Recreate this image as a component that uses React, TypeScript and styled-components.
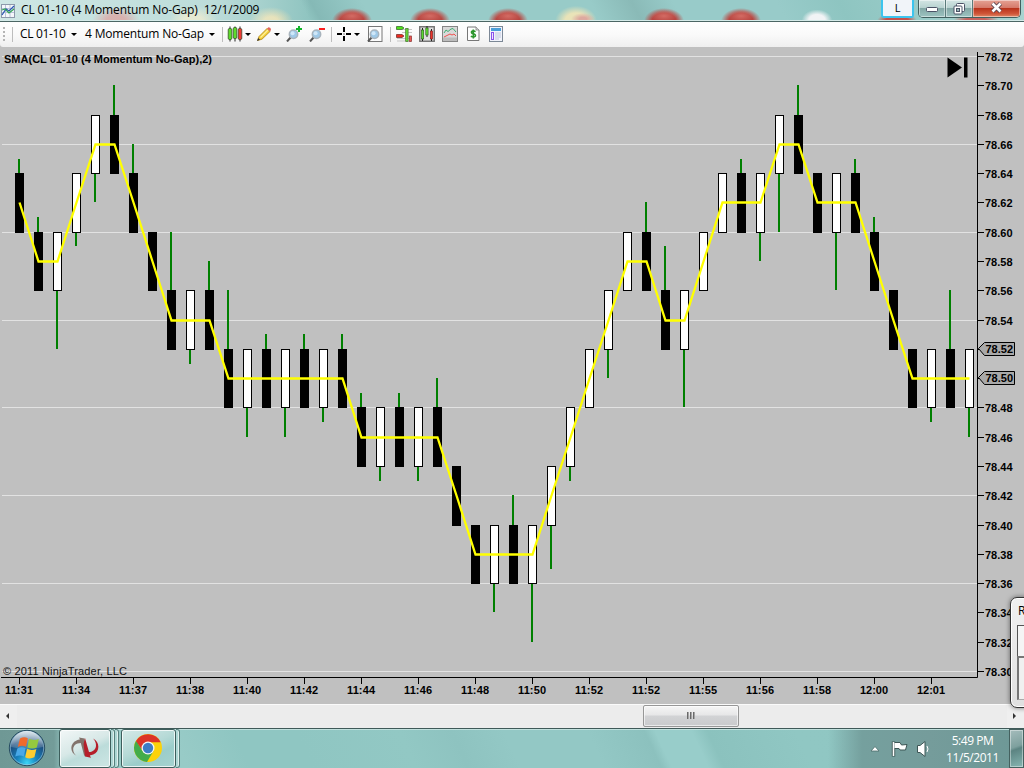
import React from 'react';
import styled, { createGlobalStyle, css } from 'styled-components';

const Global = createGlobalStyle`
  * { box-sizing: border-box; }
  html, body { margin: 0; padding: 0; overflow: hidden; }
`;

const Screen = styled.div`
  position: relative;
  display: flex;
  flex-direction: column;
  width: 1024px;
  height: 768px;
  overflow: hidden;
  background: #c0c0c0;
  font-family: 'Open Sans', 'Noto Sans', sans-serif;
  font-size: 12px;
  color: #000;
`;

const TitleBar = styled.header`
  display: flex;
  align-items: flex-start;
  height: 22px;
  flex: none;
  overflow: hidden;
  border-bottom: 1px solid #4b6664;
  box-shadow: inset 0 -1px 0 #d5ebe9;
  background:
    linear-gradient(90deg, rgba(235, 246, 245, 0.7) 0, rgba(225, 240, 238, 0.55) 215px, rgba(200, 225, 222, 0) 310px),
    radial-gradient(ellipse 24px 14px at 116px 21px, #c24843 0 40%, transparent 100%),
    radial-gradient(ellipse 24px 15px at 193px 21px, #e9dfae 0 40%, transparent 100%),
    radial-gradient(ellipse 22px 14px at 271px 21px, #e9dfae 0 30%, transparent 100%),
    radial-gradient(ellipse 13px 6px at 352px 16px, rgba(218, 116, 108, 0.8) 0, transparent 100%),
    radial-gradient(ellipse 20px 13px at 352px 21px, #b84641 0 60%, transparent 100%),
    radial-gradient(ellipse 13px 6px at 430px 16px, rgba(218, 116, 108, 0.8) 0, transparent 100%),
    radial-gradient(ellipse 20px 13px at 430px 21px, #b84641 0 60%, transparent 100%),
    radial-gradient(ellipse 13px 6px at 508px 16px, rgba(218, 116, 108, 0.8) 0, transparent 100%),
    radial-gradient(ellipse 20px 13px at 508px 21px, #b84641 0 60%, transparent 100%),
    radial-gradient(ellipse 12px 6px at 583px 19px, #dda9a0 0 30%, transparent 100%),
    radial-gradient(ellipse 22px 16px at 576px 21px, #e9e3b8 0 50%, transparent 95%),
    radial-gradient(ellipse 13px 6px at 664px 16px, rgba(218, 116, 108, 0.8) 0, transparent 100%),
    radial-gradient(ellipse 20px 13px at 664px 21px, #b84641 0 60%, transparent 100%),
    radial-gradient(ellipse 13px 6px at 741px 16px, rgba(218, 116, 108, 0.8) 0, transparent 100%),
    radial-gradient(ellipse 20px 13px at 741px 21px, #b84641 0 60%, transparent 100%),
    radial-gradient(ellipse 16px 11px at 817px 20px, #f1f3f5 0 50%, transparent 95%),
    radial-gradient(ellipse 21px 9px at 897px 21px, #c5504a 0 55%, transparent 95%),
    radial-gradient(ellipse 24px 9px at 976px 21px, #c6635e 0 45%, transparent 95%),
    linear-gradient(62deg, #8fc4c0 0 30%, #85b9b6 31%, #98cbc8 36% 58%, #8abab7 62%, #98cbc9 66% 76%, #8ec5c1 82%, #a9d4d1 100%);
`;

const TitleIcon = styled.svg`
  width: 14px;
  height: 14px;
  margin: 4px 0 0 1px;
`;

const TitleText = styled.h1`
  flex: 1;
  margin: 1px 0 0 6px;
  font-size: 12px;
  font-weight: 400;
  line-height: 18px;
  letter-spacing: -0.13px;
  white-space: pre;
`;

const LangButton = styled.div`
  width: 33px;
  height: 18px;
  margin-right: 4px;
  border: 2px solid #3cc4ee;
  border-top: 0;
  border-radius: 0 0 3px 3px;
  background: #f1f4f9;
  font-size: 11px;
  line-height: 16px;
  text-align: center;
`;

const Controls = styled.div`
  display: flex;
  width: 103px;
  height: 18px;
  margin-right: 3px;
  border: 1px solid #41605f;
  border-top: 0;
  border-radius: 0 0 5px 5px;
  overflow: hidden;
`;

const ControlButton = styled.div<{ $close?: boolean }>`
  display: flex;
  align-items: center;
  justify-content: center;
  flex: ${(p) => (p.$close ? '0 0 47px' : '1')};
  padding-bottom: ${(p) => (p.$close ? '2px' : '0')};
  border-right: 1px solid #5a7b7a;
  box-shadow: inset 0 0 0 1px rgba(255, 255, 255, 0.45);
  background: linear-gradient(#d3e5e4 0, #b9d3d1 44%, #84a8a6 50%, #9dc4c1 100%);
  ${(p) =>
    p.$close &&
    css`
      border-right: 0;
      background: linear-gradient(#e5a294 0, #d67c6c 44%, #b9341c 50%, #cf5538 80%, #df8a68 100%);
    `}
`;

const Toolbar = styled.nav`
  display: flex;
  align-items: center;
  flex: none;
  height: 25px;
  padding: 0 0 1px 3px;
  background: linear-gradient(#fefefe, #fafafa 50%, #efefef);
  border-radius: 0 0 3px 3px;
`;

const Grip = styled.div`
  width: 2px;
  height: 14px;
  background: repeating-linear-gradient(#b5b5b5 0 2px, transparent 2px 4px);
`;

const Divider = styled.div<{ $left: number; $right: number }>`
  width: 1px;
  height: 15px;
  margin: 0 ${(p) => p.$right}px 0 ${(p) => p.$left}px;
  background: #bdbdbd;
`;

const Dropdown = styled.div<{ $width: number; $gap?: number; $spacing: number }>`
  display: flex;
  align-items: center;
  justify-content: space-between;
  width: ${(p) => p.$width}px;
  margin-right: ${(p) => p.$gap ?? 0}px;
  line-height: 18px;
  letter-spacing: ${(p) => p.$spacing}px;
  white-space: nowrap;
`;

const Caret = styled.span`
  flex: none;
  width: 0;
  height: 0;
  margin-top: 1px;
  border: 3px solid transparent;
  border-top-color: #000;
  border-bottom: 0;
`;

const Tool = styled.div<{ $gap?: number }>`
  display: flex;
  align-items: center;
  gap: 2px;
  margin-right: ${(p) => p.$gap ?? 7}px;
  svg { display: block; flex: none; }
`;

const ChartArea = styled.main`
  flex: none;
  height: 657px;
  svg { display: block; }
`;

const ScrollTrack = styled.div`
  display: flex;
  align-items: stretch;
  justify-content: space-between;
  flex: none;
  height: 24px;
  border-top: 1px solid #fafafa;
  background: #ececec;
`;

const ScrollArrow = styled.div<{ $dir: 'left' | 'right' }>`
  display: flex;
  align-items: center;
  justify-content: center;
  width: 17px;
  padding-bottom: 2px;
  padding-right: 2px;
  background: #efefef;
  &::before {
    content: '';
    border: 3.5px solid transparent;
    ${(p) => (p.$dir === 'left' ? 'border-right-color: #333; border-left: 0;' : 'border-left-color: #333; border-right: 0;')}
  }
`;

const ScrollThumb = styled.div`
  display: flex;
  align-items: center;
  justify-content: center;
  width: 96px;
  height: 22px;
  margin-left: 626px;
  margin-right: 268px;
  padding-bottom: 2px;
  border: 1px solid #979797;
  border-radius: 2px;
  background: linear-gradient(#f5f5f5 0, #e7e7e8 45%, #d2d3d5 50%, #c9cacc 100%);
  box-shadow: inset 0 0 0 1px rgba(255, 255, 255, 0.6);
`;

const ThumbGrip = styled.div`
  width: 8px;
  height: 7px;
  background: repeating-linear-gradient(90deg, #6a6a6a 0 1px, #a5a5a5 1px 2px, transparent 2px 3px);
`;

const Taskbar = styled.footer`
  display: flex;
  flex: none;
  height: 40px;
  border-top: 1px solid #3f5958;
  box-shadow: inset 0 1px 0 #c0e0dd;
  background:
    linear-gradient(90deg, #6f9895 0, #739c99 54px, transparent 66px, transparent 828px, #75a09e 862px, #759c9b 930px, #6d9896 1024px),
    linear-gradient(65deg, #98cbc7 0 18%, #8fc6c2 24% 30%, #92c8c4 40%, #8ec3c0 45%, #93c8c5 50% 58%, #8cc1be 63.5%, #98cdca 64.5% 68%, #8bc2be 69.5%, #90c7c3 78%, #8fc6c2 100%);
`;

const StartOrb = styled.svg`
  width: 38px;
  height: 38px;
  margin: 0 13px 0 8px;
  flex: none;
`;

const TaskButton = styled.div<{ $width: number; $active?: boolean }>`
  display: flex;
  align-items: center;
  justify-content: center;
  width: ${(p) => p.$width}px;
  height: 39px;
  padding-right: ${(p) => (p.$active ? 0 : 2)}px;
  padding-bottom: 2px;
  border: 1px solid #3d5e5c;
  border-radius: 3px;
  box-shadow: inset 0 0 0 1px rgba(255, 255, 255, 0.75);
  background: ${(p) =>
    p.$active
      ? 'linear-gradient(155deg, #f2f7f7 0, #d7e8e7 45%, #bcdcda 60%, #cde6e4 100%)'
      : 'linear-gradient(155deg, #d5eae8 0, #b5d9d6 45%, #9bcdca 65%, #a6d3d0 100%)'};
`;

const StackEdge = styled.div<{ $gap?: number }>`
  width: 4px;
  height: 39px;
  margin-right: ${(p) => p.$gap ?? 0}px;
  border: 1px solid #55807d;
  border-left: 0;
  border-radius: 0 3px 3px 0;
  background: #acd6d3;
  box-shadow: inset -1px 0 0 rgba(255, 255, 255, 0.6);
`;

const Tray = styled.div`
  display: flex;
  align-items: center;
  margin-left: auto;
  height: 39px;
  svg { display: block; flex: none; }
`;

const Clock = styled.div`
  display: flex;
  flex-direction: column;
  align-items: center;
  width: 73px;
  padding-top: 1px;
  color: #fff;
  font-size: 12px;
  line-height: 17px;
  letter-spacing: -0.45px;
`;

const ShowDesktop = styled.div`
  width: 15px;
  height: 39px;
  border: 1px solid #44615f;
  box-shadow: inset 0 0 0 1px rgba(255, 255, 255, 0.4);
  background: linear-gradient(160deg, #a5bdbc 0, #7ea09e 45%, #5c8482 52%, #86b5b1 100%);
`;

const SideWindow = styled.aside`
  position: absolute;
  left: 1010px;
  top: 597px;
  width: 40px;
  height: 111px;
  padding: 4px 0 0 7px;
  border: 1px solid #333;
  border-radius: 7px;
  background: linear-gradient(#f0f0f0, #e0e0e0);
  box-shadow: 0 0 5px rgba(0, 0, 0, 0.5), inset 0 0 0 1px #fff;
  line-height: 18px;
`;

const SideUpper = styled.div`
  height: 31px;
  margin-top: 5px;
  margin-left: -1px;
  border: 1px solid #555;
  border-bottom: 0;
  background: #f5f5f5;
`;

const SideLower = styled.div`
  height: 44px;
  margin-left: -1px;
  border: 2px solid #777;
  border-bottom: 1px solid #aaa;
  background: #f0f0f0;
`;

type Bar = { top: number; up: boolean; wick?: number };

// Prices are cents above 78.00; every bar spans four ticks from its top.
const series =
  'B64:65 B60:61 W60:52 W64:59 W68:62 B68:70 B64:66 B60 B56:60 W56:51 B56:58 B52:56 W52:46 B52:53 W52:46 B52:53 W52:47 B52:53 B48:49 W48:43 B48:49 W48:43 B48:50 B44 B40 W40:34 B40:42 W40:32 W44:37 W48:43 W52 W56:50 W60 B60:62 B56:59 W56:48 W60 W64 B64:65 W64:58 W68:60 B68:70 B64 W64:56 B64:65 B60:61 B56 B52 W52:47 B52:56 W52:46';

const bars: Bar[] = series.split(' ').map((s) => {
  const [body, wick] = s.slice(1).split(':');
  return { up: s[0] === 'W', top: Number(body), wick: wick ? Number(wick) : undefined };
});

const CHART_TOP = 47;
const priceY = (p: number) => Math.round(56 + (72 - p) * 14.643) - CHART_TOP;
const closes = bars.map((b) => (b.up ? b.top : b.top - 4));
const sma = closes.map((c, i) => (c + (i ? closes[i - 1] : 64)) / 2);

const gridPrices = [72, 66, 60, 54, 48, 42, 36, 30];
const axisPrices = Array.from({ length: 22 }, (_, i) => 72 - i * 2);
const times = ['11:31', '11:34', '11:37', '11:38', '11:40', '11:42', '11:44', '11:46', '11:48', '11:50', '11:52', '11:52', '11:55', '11:56', '11:58', '12:00', '12:01'];

const AxisText = styled.text`
  font: bold 11px 'Liberation Sans', Arial, sans-serif;
  fill: #000;
`;

const NoteText = styled.text`
  font: 11px 'Liberation Sans', Arial, sans-serif;
  fill: #111;
`;

const Candle = ({ bar, index }: { bar: Bar; index: number }) => {
  const x = 15 + index * 19;
  const y1 = priceY(bar.top);
  const y2 = priceY(bar.top - 4) + 1;
  const w = bar.wick === undefined ? null : priceY(bar.wick);
  return (
    <g>
      {w !== null && <rect x={x + 3} width={2} y={Math.min(w, y2)} height={w < y1 ? y1 - w : w - y2} fill="#008000" />}
      <rect x={x} y={y1} width={9} height={y2 - y1} fill="#000" />
      {bar.up && <rect x={x + 1} y={y1 + 1} width={7} height={y2 - y1 - 2} fill="#fff" />}
    </g>
  );
};

const PriceTag = ({ price }: { price: number }) => {
  const y = priceY(price) - 0.5;
  return (
    <g>
      <path d={`M978.5 ${y} L984.5 ${y - 6} H1014.5 V${y + 7} H984.5 Z`} fill="#a9a9a9" stroke="#000" />
      <AxisText x={985.5} y={y + 4.5} textLength={27.5}>{`78.${price}`}</AxisText>
    </g>
  );
};

const Chart = () => (
  <svg width="1024" height="657" viewBox="0 0 1024 657">
    <rect width="1024" height="657" fill="#c0c0c0" />
    {gridPrices.map((p) => (
      <rect key={p} x={2} y={priceY(p)} width={975} height={1} fill="#e2e2e2" />
    ))}
    {bars.map((b, i) => (
      <Candle key={i} bar={b} index={i} />
    ))}
    <polyline
      fill="none"
      stroke="#ffff00"
      strokeWidth={2.3}
      points={sma.map((v, i) => `${19.5 + i * 19},${priceY(v) + 0.5}`).join(' ')}
    />
    <path d="M977.5 5 V630.5 H1" fill="none" stroke="#000" />
    {axisPrices.map((p) => (
      <g key={p}>
        <rect x={978} y={priceY(p)} width={6} height={1} fill="#000" />
        {p !== 52 && p !== 50 && (
          <AxisText x={985} y={priceY(p) + 5} textLength={27.5}>{`78.${p}`}</AxisText>
        )}
      </g>
    ))}
    <PriceTag price={52} />
    <PriceTag price={50} />
    {times.map((t, i) => (
      <g key={i}>
        <rect x={19 + i * 57} y={631} width={1} height={6} fill="#000" />
        <AxisText x={5 + i * 57} y={647} textLength={28}>{t}</AxisText>
      </g>
    ))}
    <AxisText x={4} y={16} textLength={208}>SMA(CL 01-10 (4 Momentum No-Gap),2)</AxisText>
    <NoteText x={3} y={628} textLength={124}>© 2011 NinjaTrader, LLC</NoteText>
    <path d="M947.5 10.5 V30.5 L962 20.5 Z" fill="#000" />
    <rect x={964} y={10.5} width={3.5} height={20} fill="#000" />
  </svg>
);

const CandlesIcon = () => (
  <svg width="16" height="16" viewBox="0 0 16 16">
    {['#5fdc2c', '#5fdc2c', '#ee3b35'].map((c, i) => (
      <g key={i}>
        <path d={`M${3 + i * 5} 0.5 V15.5`} stroke="#222" />
        <rect x={1.2 + i * 5} y={i === 1 ? 1.5 : 2.5} width="3.6" height="11" rx="1.3" fill={c} stroke="#2c3f22" strokeWidth=".7" />
      </g>
    ))}
  </svg>
);

const PencilIcon = () => (
  <svg width="16" height="16" viewBox="0 0 16 16">
    <path d="M1.5 14.5 L3 10.5 L11 2.5 L14 5.5 L6 13.2 Z" fill="#f5cf39" stroke="#a98218" strokeWidth=".8" />
    <path d="M4.5 11.5 L12 4" stroke="#fdf09a" strokeWidth="1.2" />
    <path d="M11 2.5 L12.5 1.2 Q15 1 15 3.8 L14 5.5 Z" fill="#e2645a" />
    <path d="M1 15 L2.2 12 L4 13.8 Z" fill="#333" />
  </svg>
);

const ZoomIcon = ({ mark, framed }: { mark?: 'plus' | 'minus'; framed?: boolean }) => (
  <svg width="16" height="16" viewBox="0 0 16 16">
    {framed && <rect x="1.5" y=".5" width="13.5" height="15" fill="#fcfcfc" stroke="#777" />}
    <path d="M1 15.5 L5 11" stroke="#555" strokeWidth="2" />
    <circle cx="7.5" cy="8.3" r="4.2" fill="#9fc9e8" stroke="#a9b4bd" strokeWidth="1.5" />
    <circle cx="6.6" cy="7.3" r="2" fill="#cfe7f8" />
    {mark && <path d="M10 3 H16" stroke={mark === 'plus' ? '#12b42a' : '#fb1e1e'} strokeWidth="2" />}
    {mark === 'plus' && <path d="M13 0 V6" stroke="#12b42a" strokeWidth="2" />}
  </svg>
);

const CrossIcon = () => (
  <svg width="15" height="16" viewBox="0 0 15 16">
    <path d="M0 8 H5 M9 8 H14 M7 1 V6 M7 10 V15" stroke="#000" strokeWidth="2" />
    <rect x="6.5" y="7.5" width="1" height="1" />
  </svg>
);

const DepthIcon = () => (
  <svg width="17" height="16" viewBox="0 0 17 16">
    <path d="M6 3.5 H16 M6 6.5 H16 M1 12.5 H16 M1 15 H16" stroke="#c5c5c5" />
    <path d="M0.5 0.5 H6 L8 2 L6 3.5 H0.5 Z" fill="#4fe01c" stroke="#315c22" strokeWidth=".7" />
    <path d="M0.5 8.5 H6 L8 10 L6 11.5 H0.5 Z" fill="#ed2b23" stroke="#6c2420" strokeWidth=".7" />
    <rect x="9.7" y="2.5" width="2.4" height="13" fill="#65d838" stroke="#3f7129" strokeWidth=".7" />
    <rect x="13.5" y="10" width="2" height="5.5" fill="#ef5652" stroke="#863331" strokeWidth=".7" />
  </svg>
);

const FrameCandlesIcon = () => (
  <svg width="16" height="16" viewBox="0 0 16 16">
    <rect x=".75" y=".75" width="14.5" height="14.5" fill="#dedede" stroke="#707070" strokeWidth="1.4" />
    <path d="M3.5 2 V15 M8 0 V11 M12.5 3 V15" stroke="#222" />
    <rect x="2.4" y="4" width="2.3" height="9" fill="#5bdb30" stroke="#285719" strokeWidth=".6" />
    <rect x="6.8" y="2" width="2.3" height="7" fill="#5bdb30" stroke="#285719" strokeWidth=".6" />
    <rect x="11.3" y="5" width="2.3" height="8" fill="#ee342c" stroke="#741b18" strokeWidth=".6" />
  </svg>
);

const LinesIcon = () => (
  <svg width="16" height="16" viewBox="0 0 16 16">
    <rect x=".5" y=".5" width="15" height="15" fill="#d9d9d9" stroke="#858585" />
    <path d="M1 11.5 H15 V15 H1 Z" fill="#bcbcbc" />
    <path d="M2 7 L4 4 L6 5.5 L9 3 L11 2.5 L14 6" fill="none" stroke="#3fae72" />
    <path d="M2 11 L5 9.5 L8 8 L10 9 L12 8 L14 10" fill="none" stroke="#f0514e" />
  </svg>
);

const DollarIcon = () => (
  <svg width="13" height="16" viewBox="0 0 13 16">
    <path d="M.5 1 H9 L12 4 V14.5 H.5 Z" fill="#fdfdfd" stroke="#777" />
    <path d="M9 1 V4 H12" fill="#ddd" stroke="#777" strokeWidth=".7" />
    <path d="M8.6 5.6 Q6 4.2 4.6 5.5 Q4 7.3 6.3 7.8 Q9 8.4 8.3 10.2 Q6.8 11.7 3.8 10.3 M6.3 3.5 V12.5" fill="none" stroke="#2c962c" strokeWidth="1.6" />
  </svg>
);

const PanelIcon = () => (
  <svg width="14" height="16" viewBox="0 0 14 16">
    <rect x=".5" y=".5" width="13" height="15" fill="#f1f3fb" stroke="#7c8896" />
    <rect x="2" y="2" width="10" height="3" fill="#4a9fd9" />
    <rect x="2.5" y="6.5" width="2" height="7" fill="#efe6ff" stroke="#8a52ea" />
    <path d="M6 7 H12 M6 9 H12 M6 11 H12 M6 13 H10" stroke="#c0c8dc" />
  </svg>
);

const WindowsLogo = () => (
  <StartOrb viewBox="0 0 38 38">
    <defs>
      <radialGradient id="orb" cx="50%" cy="92%" r="85%">
        <stop offset="0" stopColor="#3cd5f5" />
        <stop offset=".35" stopColor="#1781bd" />
        <stop offset=".75" stopColor="#1d4c7c" />
        <stop offset="1" stopColor="#6d93ae" />
      </radialGradient>
      <linearGradient id="gloss" x2="0" y2="1">
        <stop offset="0" stopColor="#fff" stopOpacity=".75" />
        <stop offset="1" stopColor="#fff" stopOpacity=".12" />
      </linearGradient>
    </defs>
    <circle cx="19" cy="19" r="17.7" fill="url(#orb)" stroke="#264b60" />
    <circle cx="19" cy="19" r="16.7" fill="none" stroke="#a5cfe0" strokeOpacity=".6" />
    <path d="M3 18 A16 16 0 0 1 35 18 Q19 22 3 18 Z" fill="url(#gloss)" />
    <path d="M12 9.5 Q16 7 19.8 9.2 L18 17.8 Q14 15.8 9.8 18 Z" fill="#f06a2c" />
    <path d="M21 9.8 Q25.5 12 30.8 10 L28.8 18.6 Q24 20.6 19.4 18.4 Z" fill="#95c93f" />
    <path d="M9.4 19.4 Q13.6 17.4 17.6 19.2 L15.8 27.4 Q11.8 25.4 7.2 27.5 Z" fill="#49a8e8" />
    <path d="M19 19.8 Q23.5 22 28.4 20 L26.4 28.3 Q21.5 30.5 17.2 28.2 Z" fill="#fdcc32" />
  </StartOrb>
);

const NinjaLogo = () => (
  <svg width="30" height="24" viewBox="0 0 30 24">
    <path d="M6.5 19.8 C-0.5 17 -0.3 7 6.5 4.4 C8 3.8 9 3.6 10 3.6 L9 1.6 L14.6 2.6 L16 15.5 L14.4 20.5 L10.8 7 C6 7 3.2 9.8 3.2 13.4 C3.2 16 4.4 18 6.5 19.8 Z" fill="#82736c" />
    <path d="M23 2.4 C30 5.4 30.2 16 23.2 18.6 L19.8 19.4 L21 21.8 L15 20.4 L13.6 8 L15 2 L19 16 C23.5 15.8 26 13 26 9.4 C26 6.6 25 4.4 23 2.4 Z" fill="#b51f2a" />
  </svg>
);

const ChromeLogo = () => (
  <svg width="30" height="30" viewBox="0 0 30 30">
    <circle cx="15" cy="15" r="14" fill="#fbd20b" />
    <path d="M2.9 8 A14 14 0 0 0 14 29 L20.5 18 L15 15 L9.5 18.3 L4 8.5 Z" fill="#43ac4a" />
    <path d="M3 8 A14 14 0 0 1 27.7 9.3 H14 L9.2 17 Z" fill="#dc3428" />
    <circle cx="15" cy="15" r="6.5" fill="#f4f7f8" />
    <circle cx="15" cy="15" r="5.2" fill="#3d7cc7" />
  </svg>
);

const App = () => (
  <>
    <Global />
    <Screen>
      <TitleBar>
        <TitleIcon viewBox="0 0 14 14">
          <rect x=".5" y=".5" width="13" height="13" fill="#f5f7fb" stroke="#8d99ab" />
          <path d="M1 4.5 H13 M1 8.5 H13 M4.5 1 V13 M9 1 V13" stroke="#b9c4d8" />
          <path d="M1 11 L5 5 L8 7 L13 2" fill="none" stroke="#2c58b4" strokeWidth="1.3" />
          <path d="M1 6 L4 5 L8 9 L13 5" fill="none" stroke="#35a557" strokeWidth="1.3" />
        </TitleIcon>
        <TitleText>{'CL 01-10 (4 Momentum No-Gap)  12/1/2009'}</TitleText>
        <LangButton>L</LangButton>
        <Controls>
          <ControlButton>
            <svg width="13" height="6" viewBox="0 0 13 6"><rect x=".5" y="1.5" width="11" height="4" rx="1" fill="#fff" stroke="#4b5266" /></svg>
          </ControlButton>
          <ControlButton>
            <svg width="13" height="12" viewBox="0 0 13 12">
              <rect x="3.5" y=".5" width="8" height="8" rx="1" fill="#fff" stroke="#4b5266" />
              <rect x="1" y="3" width="8" height="8" rx="1" fill="#fff" stroke="#4b5266" />
              <rect x="3.5" y="5.5" width="3" height="3" fill="#98b7b6" stroke="#4b5266" />
            </svg>
          </ControlButton>
          <ControlButton $close>
            <svg width="13" height="11" viewBox="0 0 13 11">
              <path d="M2.5 1.5 L10.5 9.5 M10.5 1.5 L2.5 9.5" stroke="#5a4650" strokeWidth="4.4" />
              <path d="M2.5 1.5 L10.5 9.5 M10.5 1.5 L2.5 9.5" stroke="#fff" strokeWidth="2.6" />
            </svg>
          </ControlButton>
        </Controls>
      </TitleBar>
      <Toolbar>
        <Grip />
        <Divider $left={7} $right={7} />
        <Dropdown $width={57} $gap={8} $spacing={-0.35}>CL 01-10<Caret /></Dropdown>
        <Dropdown $width={130} $spacing={-0.17}>4 Momentum No-Gap<Caret /></Dropdown>
        <Divider $left={7} $right={4} />
        <Tool $gap={5}><CandlesIcon /><Caret /></Tool>
        <Tool $gap={6}><PencilIcon /><Caret /></Tool>
        <Tool $gap={7}><ZoomIcon mark="plus" /></Tool>
        <Tool $gap={6}><ZoomIcon mark="minus" /></Tool>
        <Divider $left={0} $right={5} />
        <Tool><CrossIcon /><Caret /></Tool>
        <Tool $gap={7}><ZoomIcon framed /></Tool>
        <Divider $left={0} $right={5} />
        <Tool $gap={6}><DepthIcon /></Tool>
        <Tool $gap={7}><FrameCandlesIcon /></Tool>
        <Tool $gap={9}><LinesIcon /></Tool>
        <Tool $gap={9}><DollarIcon /></Tool>
        <Tool $gap={0}><PanelIcon /></Tool>
      </Toolbar>
      <ChartArea><Chart /></ChartArea>
      <ScrollTrack>
        <ScrollArrow $dir="left" />
        <ScrollThumb><ThumbGrip /></ScrollThumb>
        <ScrollArrow $dir="right" />
      </ScrollTrack>
      <Taskbar>
        <WindowsLogo />
        <TaskButton $width={52} $active><NinjaLogo /></TaskButton>
        <StackEdge />
        <StackEdge $gap={2} />
        <TaskButton $width={55}><ChromeLogo /></TaskButton>
        <StackEdge />
        <Tray>
          <svg width="10" height="8" viewBox="0 0 10 8"><path d="M1 6 L5 1.5 L9 6 Z" fill="#fff" stroke="#4d6d6b" strokeWidth=".8" /></svg>
          <svg width="32" height="18" viewBox="0 0 32 18">
            <path d="M13.5 1.5 V16.5" stroke="#3d5655" strokeWidth="3.4" />
            <path d="M14 2.5 H20 L21.5 5 L27 4.5 L25.5 10 H20 L19 8.5 H14 Z" fill="#fff" stroke="#3d5655" />
            <path d="M13.5 2 V16" stroke="#fff" strokeWidth="1.6" />
          </svg>
          <svg width="24" height="18" viewBox="-3 0 24 18">
            <path d="M2.5 5.5 H5 L10 1.5 V16.5 L5 12.5 H2.5 Z" fill="#fff" stroke="#3d5655" />
            <path d="M12 6 Q14 9 12 12" fill="none" stroke="#fff" />
          </svg>
          <Clock><span>5:49 PM</span><span>11/5/2011</span></Clock>
          <ShowDesktop />
        </Tray>
      </Taskbar>
      <SideWindow>
        R
        <SideUpper />
        <SideLower />
      </SideWindow>
    </Screen>
  </>
);

export default App;
